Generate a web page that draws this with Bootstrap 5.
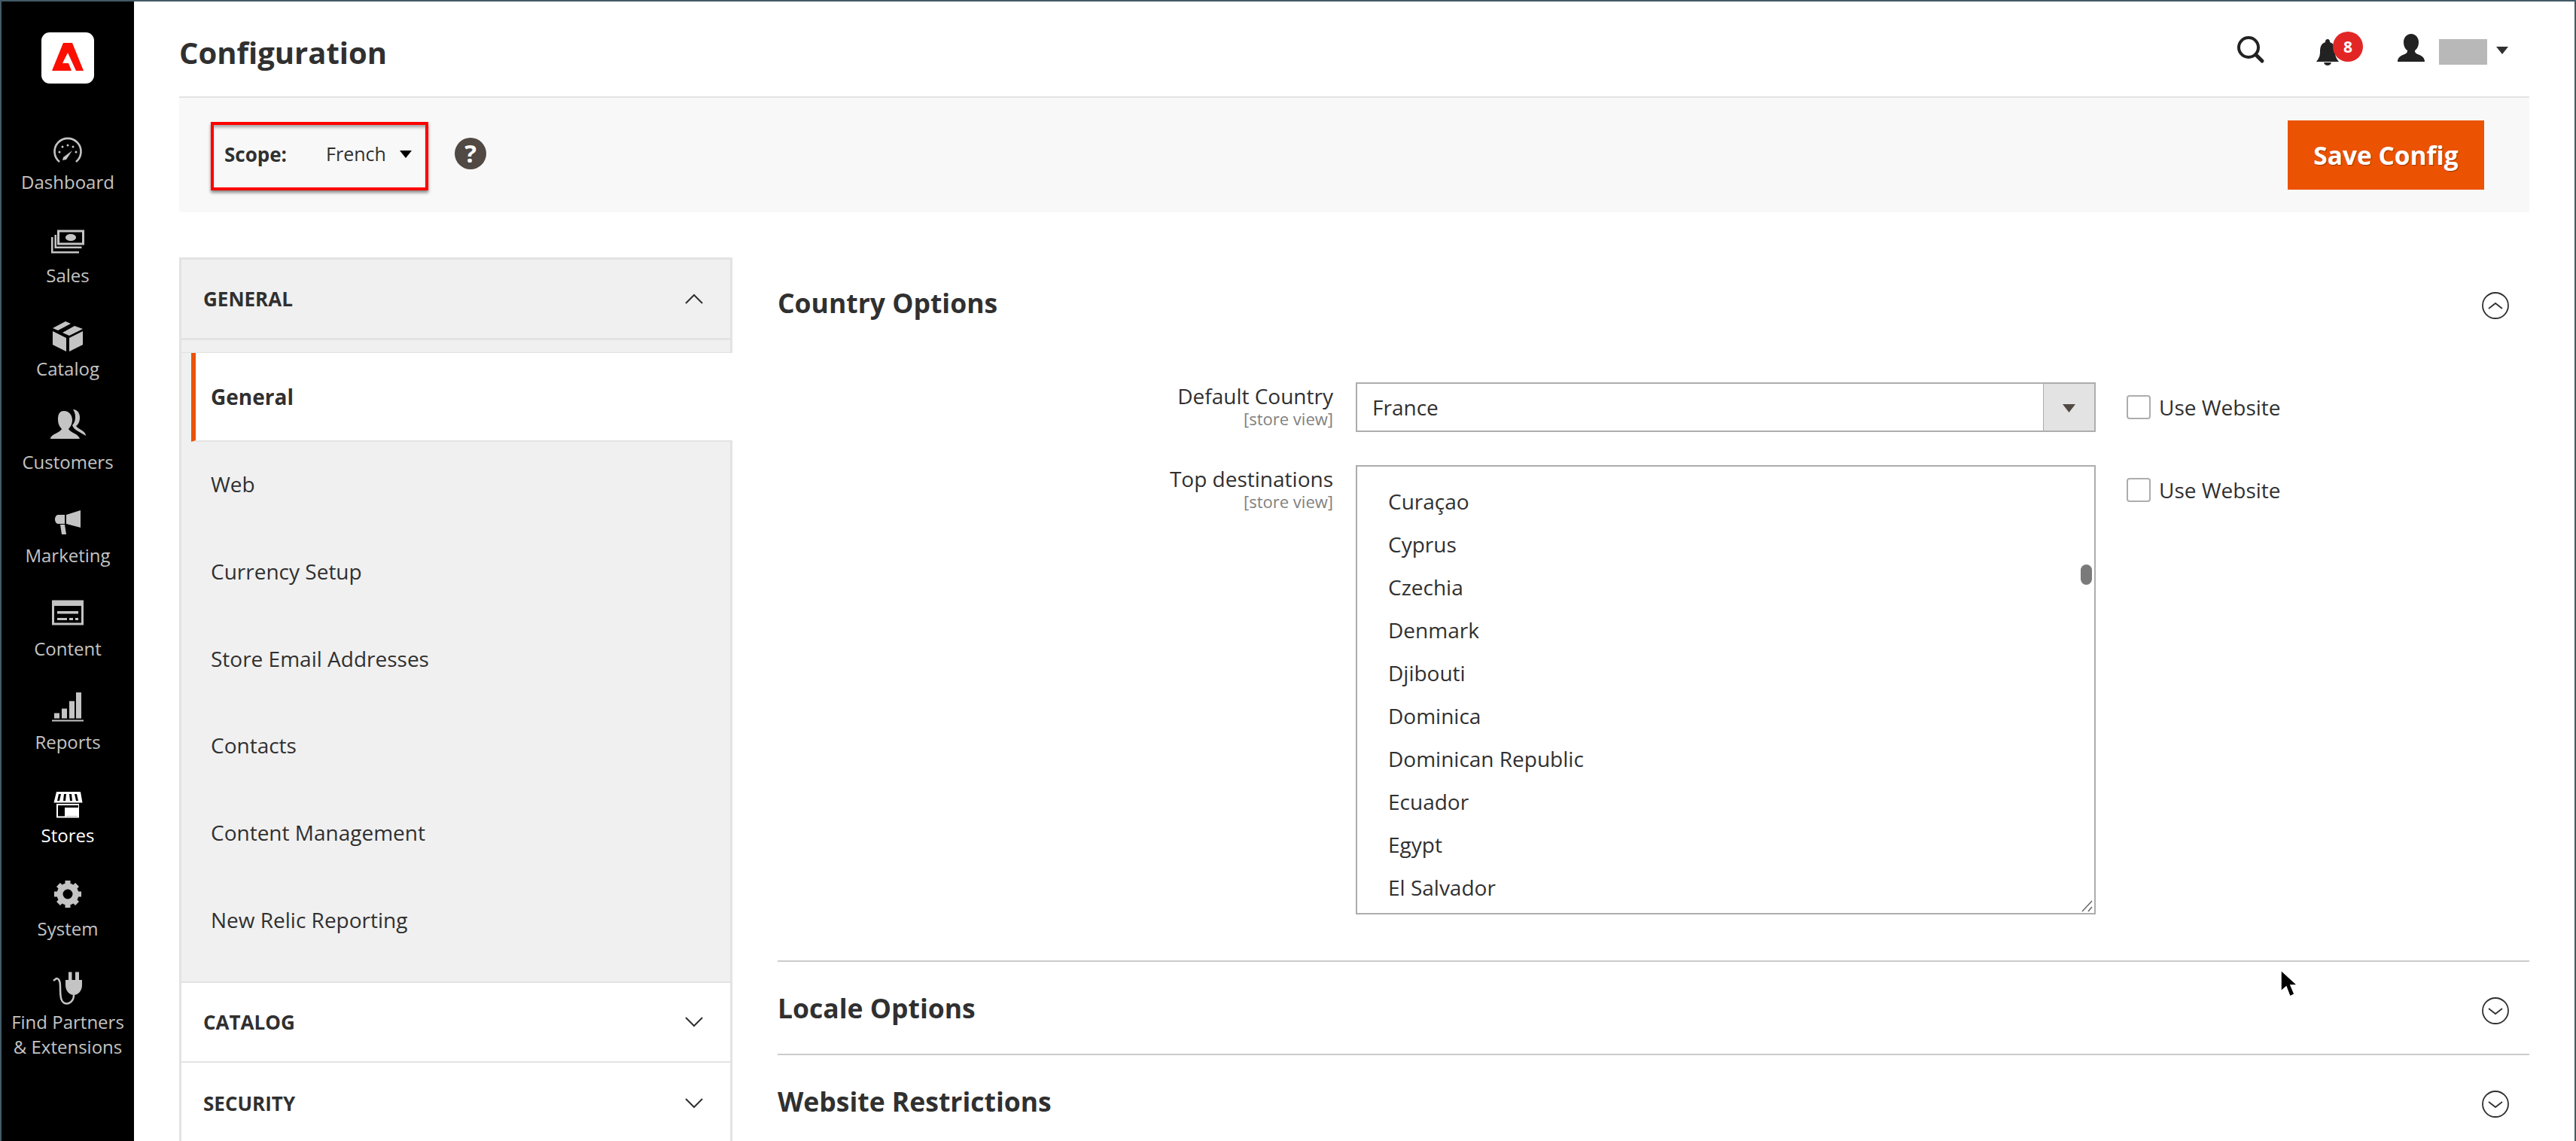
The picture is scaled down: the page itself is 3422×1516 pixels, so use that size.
<!DOCTYPE html>
<html lang="en">
<head>
  <meta charset="UTF-8">
  <meta name="viewport" content="width=device-width, initial-scale=1.0">
  <title>Configuration</title>
  <link href="https://cdn.jsdelivr.net/npm/bootstrap@5.3.0/dist/css/bootstrap.min.css" rel="stylesheet">
  <style>
    html, body { height: 100%; }
    body {
      font-family: "Open Sans", "Noto Sans", sans-serif;
      color: #303030;
      font-size: 28px;
      overflow: hidden;
      border: solid #425a66;
      border-width: 2px 2px 0 2px;
    }
    .side-rail { width: 176px; background: #000; flex: none; }
    .rail-logo {
      width: 70px; height: 68px; margin: 41px auto 57.5px;
      background: #fff; border-radius: 11px;
    }
    .rail-item { height: 124.1px; text-align: center; color: #c4c4c4; font-size: 24px; line-height: 33px; }
    .rail-item svg { display: block; width: 80px; height: 56px; margin: 0 auto; fill: #c4c4c4; }
    .rail-item.is-current { color: #fff; }
    .rail-item.is-current svg { fill: #fff; }
    .page-main { padding: 0 60px; min-width: 0; }
    .top-head { height: 126px; padding-top: 10px; }
    .top-head h1 { font-size: 40px; font-weight: 700; margin: 0; color: #303030; }
    .head-tools { height: 60px; padding-right: 28px; }
    .head-tools svg { display: block; height: 60px; }
    .bell-wrap { margin-left: 65px; width: 65px; }
    .bell-count {
      position: absolute; left: 24px; top: 2px; width: 40px; height: 40px;
      background: #e22626; color: #fff; border-radius: 50%;
      font-size: 21px; font-weight: 700; line-height: 40px; text-align: center;
    }
    .user-icon { margin-left: 43px; }
    .user-name { width: 64px; height: 34px; margin: 12px 0 0 17px; background: #b8b8b8; }
    .user-caret { margin: 22px 0 0 12px; border-style: solid; border-width: 10px 8px 0; border-color: #303030 transparent transparent; }
    .action-bar {
      height: 154px; background: #f8f8f8; border-top: 2px solid #e3e3e3;
      padding: 0 60px 0 42px;
    }
    .scope-box {
      width: 289px; height: 91px; margin-top: 3px; padding: 0 18px 5px 14px;
      border: 4px solid #f00; box-shadow: 0 3px 4px rgba(0,0,0,.45), inset 0 5px 4px -2px rgba(0,0,0,.35);
    }
    .scope-label { font-weight: 700; font-size: 26px; color: #303030; }
    .scope-value { margin-left: 52px; font-size: 25px; color: #303030; }
    .scope-caret { margin-left: 18px; border-style: solid; border-width: 10px 8px 0; border-color: #000 transparent transparent; }
    .help-dot {
      width: 42px; height: 42px; margin: -4px 0 0 35px; border-radius: 50%;
      background: #514943; color: #fff; font-weight: 700; font-size: 33px; line-height: 42px; text-align: center;
    }
    .save-btn {
      width: 261px; height: 92px; border-radius: 0; border: 0;
      background: #eb5202; color: #fff; font-size: 33.500px; font-weight: 700; padding: 0;
      text-shadow: 1px 1px 1px rgba(0,0,0,.35);
    }
    .save-btn:hover { background: #eb5202; color: #fff; }
    .work-area { margin-top: 60px; gap: 60px; }
    .left-nav { width: 735px; flex: none; }
    .nav-head {
      height: 110px; padding: 0 35px 0 29px; background: #f0f0f0;
      border: 3px solid #e3e3e3; font-size: 26px; font-weight: 700; color: #303030;
    }
    .nav-strip { height: 18px; background: #f0f0f0; border: solid #e3e3e3; border-width: 0 3px 2px; }
    .nav-items { background: #f0f0f0; padding: 0 0 23px 13px; border: solid #e3e3e3; border-width: 0 3px 2px; }
    .nav-link-row { height: 115.7px; padding: 0 0 3px 26px; font-size: 28px; color: #303030; }
    .nav-link-row.is-open {
      height: 118px; margin-right: -3px; margin-top: -1px; padding: 0 0 0 20px;
      background: #fff; font-weight: 700;
      border-left: 6px solid #eb5202; border-bottom: 2px solid #e3e3e3;
    }
    .nav-closed {
      height: 106px; padding: 0 35px 0 29px; background: #fff;
      border: solid #e3e3e3; border-width: 0 3px 2px; font-size: 26px; font-weight: 700;
    }
    .nav-closed + .nav-closed { height: 110px; }
    .settings { min-width: 0; flex: 1; }
    .group-row h2 { font-size: 35.500px; font-weight: 700; margin: 0; color: #303030; }
    .group-row svg { margin-top: 7px; margin-right: 27px; }
    .group-top { height: 120px; }
    .group-shut { height: 124px; border-top: 2px solid #ccc; }
    .group-first { margin-top: 61px; }
    .field-row { margin-top: 46px; }
    .field-row + .field-row { margin-top: 44px; }
    .field-name { width: 768px; padding: 0 30px 0 0; text-align: right; flex: none; font-size: 28px; line-height: 36px; }
    .field-name small { display: block; font-size: 22px; line-height: 24px; color: #808080; }
    .cfg-select {
      width: 983px; height: 66px; padding: 0 80px 0 20px; border: 2px solid #adadad; border-radius: 0;
      font-size: 28px; color: #303030; flex: none;
      background: #fff url("data:image/svg+xml,%3Csvg xmlns='http://www.w3.org/2000/svg' width='68' height='62'%3E%3Crect width='68' height='62' fill='%23e3e3e3'/%3E%3Cpath d='M0 0V62' stroke='%23adadad' stroke-width='2'/%3E%3Cpath d='M26 27h17l-8.500 11z' fill='%23514943'/%3E%3C/svg%3E") no-repeat right center / 68px 62px;
    }
    .cfg-multi {
      width: 983px; height: 597px; padding: 18px 0 0 41px; flex: none; overflow: hidden;
      border: 2px solid #adadad; font-size: 28px; color: #303030;
    }
    .cfg-multi li { height: 57px; line-height: 57px; }
    .multi-thumb { position: absolute; left: 961px; top: 130px; width: 15px; height: 27px; border-radius: 8px; background: #7a7a7a; }
    .multi-grip { position: absolute; right: 1px; bottom: 1px; }
    .site-check { margin-left: 41px; height: 66px; font-size: 28px; white-space: nowrap; }
    .site-check .form-check-input {
      width: 32px; height: 32px; margin: 0 11px 0 0; border: 2px solid #adadad; border-radius: 4px; flex: none;
    }
    .mouse-arrow { position: absolute; left: 3028px; top: 1288px; }
  </style>
</head>
<body class="d-flex m-0">
  <!-- Left rail -->
  <nav class="side-rail">
    <div class="rail-logo">
      <svg width="70" height="68" viewBox="0 0 70 68"><path fill="#fa0f00" d="M14 51 29 14h12l15 37H46L35 27l-7 14h8l4 10z"/></svg>
    </div>
    <div class="rail-item">
      <svg viewBox="0 0 80 56"><path d="M29 46A17.5 17.5 0 1 1 51 46" fill="none" stroke="#c4c4c4" stroke-width="2.6"/><path d="M33 44l1-4 12-9-8 12z"/><circle cx="29" cy="33" r="1.5"/><circle cx="33" cy="26" r="1.5"/><circle cx="40" cy="24" r="1.5"/><circle cx="47" cy="26" r="1.5"/><circle cx="51" cy="33" r="1.5"/></svg>
      Dashboard
    </div>
    <div class="rail-item">
      <svg viewBox="0 0 80 56"><path fill-rule="evenodd" d="M26 12.500h36v20H26zM29 15.500v14h30v-14zM44 18c4 0 7 2 7 4.500S48 27 44 27s-7-2-7-4.500S40 18 44 18z"/><path d="M22.500 19v18h36v-2.500H25V19zM18 22v21.500h37v-2.500H20.500V22z"/></svg>
      Sales
    </div>
    <div class="rail-item">
      <svg viewBox="0 0 80 56"><path d="M20 23l18 9v18l-18-9zM60 23l-18 9v18l18-9zM20 19l17-9 7 3-17 9zM33 25l16-9 11 4-18 9z"/></svg>
      Catalog
    </div>
    <div class="rail-item">
      <svg viewBox="0 0 80 56"><path d="M47 3c6 0 9 5 9 11 0 5-2 9-5 11 1 2 5 4 8 6 3 2 5 4 5 7l-12-7c-3-2-5-4-6-7 3-3 4-7 4-11 0-4-1-7-3-10z"/><path d="M35 5c7 0 11 6 11 12 0 5-2 9-5 12 1 2 4 4 8 6 4 2 6 4 7 7H17c0-3 3-5 7-7 4-2 7-4 8-6-3-3-5-7-5-12 0-6 1-12 8-12z"/></svg>
      Customers
    </div>
    <div class="rail-item">
      <svg viewBox="0 0 80 56"><path d="M38 19l19-6v23l-19-5zM27 19h9v12h-9c-2 0-4-3-4-6s2-6 4-6zM30 32h6l2 13h-6z"/></svg>
      Marketing
    </div>
    <div class="rail-item">
      <svg viewBox="0 0 80 56"><path fill-rule="evenodd" d="M19 8.500h42v33H19zM22 16v22.500h36V16z"/><path d="M26 23h28v3.500H26zM26 32h13v3H26zM42 32h5v3h-5zM50 32h4v3h-4z"/></svg>
      Content
    </div>
    <div class="rail-item">
      <svg viewBox="0 0 80 56"><path d="M22 34.500h7v7h-7zM32 28.500h7v13h-7zM42 18.500h7v23h-7zM51 7h7v34.500h-7zM19 43.500h42v2H19z"/></svg>
      Reports
    </div>
    <div class="rail-item is-current">
      <svg viewBox="0 0 80 56"><path fill-rule="evenodd" d="M25 15h32l2.500 14.500h-38zM28 18l-2 9h3l2-9zM35 18l-1 9h3l1-9zM42 18l1 9h3l-1-9zM49 18l2 9h3l-2-9z"/><path fill-rule="evenodd" d="M25 31h30v18.500H25zM27 33v14.500h9V36h18v-3zM38 38v9.500h15V38z"/><path d="M38 38h15v9.500H38z"/></svg>
      Stores
    </div>
    <div class="rail-item">
      <svg viewBox="0 0 80 56"><g stroke="#c4c4c4" stroke-width="7"><path d="M40 9V45M22 27H58M27.500 14.500 52.500 39.500M52.500 14.500 27.500 39.500"/></g><circle cx="40" cy="27" r="10.500" fill="#000" stroke="#c4c4c4" stroke-width="8"/></svg>
      System
    </div>
    <div class="rail-item">
      <svg viewBox="0 0 80 56"><path d="M41 6.500h4.500V17H50V6.500h5V17h4v7c0 7-5 13-11 13s-11-6-11-13v-7h4z"/><path d="M48 37C48 46 41 49.500 36 48 31 46 30 40 30 26 30 18 28 15 25 15L21 18" fill="none" stroke="#c4c4c4" stroke-width="2.500"/></svg>
      Find Partners<br>&amp; Extensions
    </div>
  </nav>

  <!-- Main content -->
  <main class="page-main flex-grow-1">
    <header class="top-head d-flex justify-content-between align-items-center">
      <h1>Configuration</h1>
      <div class="head-tools d-flex align-items-start">
        <svg width="40" viewBox="0 0 40 60"><circle cx="17" cy="23" r="13" fill="none" stroke="#222" stroke-width="4"/><path d="M27 33l8 8" stroke="#222" stroke-width="5" stroke-linecap="round"/></svg>
        <div class="bell-wrap position-relative">
          <svg width="65" viewBox="0 0 65 60"><path fill="#222" d="M17 12c2 0 3 1 3 4 6 2 7 7 7 13 0 6 2 9 5 13H2c3-4 5-7 5-13 0-6 1-11 7-13 0-3 1-4 3-4zM12 43h10c-1 3-3 4-5 4s-4-1-5-4z"/></svg>
          <span class="bell-count">8</span>
        </div>
        <svg class="user-icon" width="40" viewBox="0 0 40 60"><path fill="#222" d="M20 5c6 0 10 5 10 11 0 5-2 9-5 11 0 3 1 4 6 6 5 2 7 5 7 9H2c0-4 2-7 7-9 5-2 6-3 6-6-3-2-5-6-5-11 0-6 4-11 10-11z"/></svg>
        <div class="user-name"></div>
        <div class="user-caret"></div>
      </div>
    </header>

    <section class="action-bar d-flex justify-content-between align-items-center">
      <div class="d-flex align-items-center">
        <div class="scope-box d-flex align-items-center">
          <span class="scope-label">Scope:</span>
          <span class="scope-value">French</span>
          <span class="scope-caret"></span>
        </div>
        <div class="help-dot">?</div>
      </div>
      <button type="button" class="btn save-btn">Save Config</button>
    </section>

    <div class="work-area d-flex align-items-start">
      <aside class="left-nav">
        <div class="nav-head d-flex justify-content-between align-items-center">
          <span>GENERAL</span>
          <svg width="26" height="14" viewBox="0 0 26 14"><path d="M2 13 13 2l11 11" fill="none" stroke="#303030" stroke-width="2"/></svg>
        </div>
        <div class="nav-strip"></div>
        <div class="nav-items">
          <div class="nav-link-row is-open d-flex align-items-center">General</div>
          <div class="nav-link-row d-flex align-items-center">Web</div>
          <div class="nav-link-row d-flex align-items-center">Currency Setup</div>
          <div class="nav-link-row d-flex align-items-center">Store Email Addresses</div>
          <div class="nav-link-row d-flex align-items-center">Contacts</div>
          <div class="nav-link-row d-flex align-items-center">Content Management</div>
          <div class="nav-link-row d-flex align-items-center">New Relic Reporting</div>
        </div>
        <div class="nav-closed d-flex justify-content-between align-items-center">
          <span>CATALOG</span>
          <svg width="26" height="14" viewBox="0 0 26 14"><path d="M2 1l11 11L24 1" fill="none" stroke="#303030" stroke-width="2"/></svg>
        </div>
        <div class="nav-closed d-flex justify-content-between align-items-center">
          <span>SECURITY</span>
          <svg width="26" height="14" viewBox="0 0 26 14"><path d="M2 1l11 11L24 1" fill="none" stroke="#303030" stroke-width="2"/></svg>
        </div>
      </aside>

      <div class="settings">
        <div class="group-row group-top d-flex justify-content-between align-items-center">
          <h2>Country Options</h2>
          <svg width="36" height="36" viewBox="0 0 36 36"><circle cx="18" cy="18" r="17" fill="none" stroke="#303030" stroke-width="1.800"/><path d="M9 22l9-7 9 7" fill="none" stroke="#303030" stroke-width="1.800"/></svg>
        </div>

        <div class="field-row d-flex align-items-start">
          <div class="field-name">Default Country<small>[store view]</small></div>
          <select class="form-select cfg-select" aria-label="Default Country"><option>France</option></select>
          <label class="site-check d-flex align-items-center"><input class="form-check-input" type="checkbox">Use Website</label>
        </div>

        <div class="field-row d-flex align-items-start">
          <div class="field-name">Top destinations<small>[store view]</small></div>
          <div class="cfg-multi position-relative">
            <ul class="list-unstyled m-0">
              <li>Curaçao</li>
              <li>Cyprus</li>
              <li>Czechia</li>
              <li>Denmark</li>
              <li>Djibouti</li>
              <li>Dominica</li>
              <li>Dominican Republic</li>
              <li>Ecuador</li>
              <li>Egypt</li>
              <li>El Salvador</li>
            </ul>
            <div class="multi-thumb"></div>
            <svg class="multi-grip" width="16" height="16" viewBox="0 0 16 16"><path d="M1 15 14 1M9 15l5-6" stroke="#666" stroke-width="1.500"/></svg>
          </div>
          <label class="site-check d-flex align-items-center"><input class="form-check-input" type="checkbox">Use Website</label>
        </div>

        <div class="group-row group-shut group-first d-flex justify-content-between align-items-center">
          <h2>Locale Options</h2>
          <svg width="36" height="36" viewBox="0 0 36 36"><circle cx="18" cy="18" r="17" fill="none" stroke="#303030" stroke-width="1.800"/><path d="M9 15l9 7 9-7" fill="none" stroke="#303030" stroke-width="1.800"/></svg>
        </div>
        <div class="group-row group-shut d-flex justify-content-between align-items-center">
          <h2>Website Restrictions</h2>
          <svg width="36" height="36" viewBox="0 0 36 36"><circle cx="18" cy="18" r="17" fill="none" stroke="#303030" stroke-width="1.800"/><path d="M9 15l9 7 9-7" fill="none" stroke="#303030" stroke-width="1.800"/></svg>
        </div>
      </div>
    </div>
  </main>

  <svg class="mouse-arrow" width="26" height="40" viewBox="0 0 26 40"><path d="M2 1 2 29 9 23 14 36 20 33 15 21 24 21z" fill="#000" stroke="#fff" stroke-width="1.500"/></svg>

  <script src="https://cdn.jsdelivr.net/npm/bootstrap@5.3.0/dist/js/bootstrap.bundle.min.js"></script>
</body>
</html>
